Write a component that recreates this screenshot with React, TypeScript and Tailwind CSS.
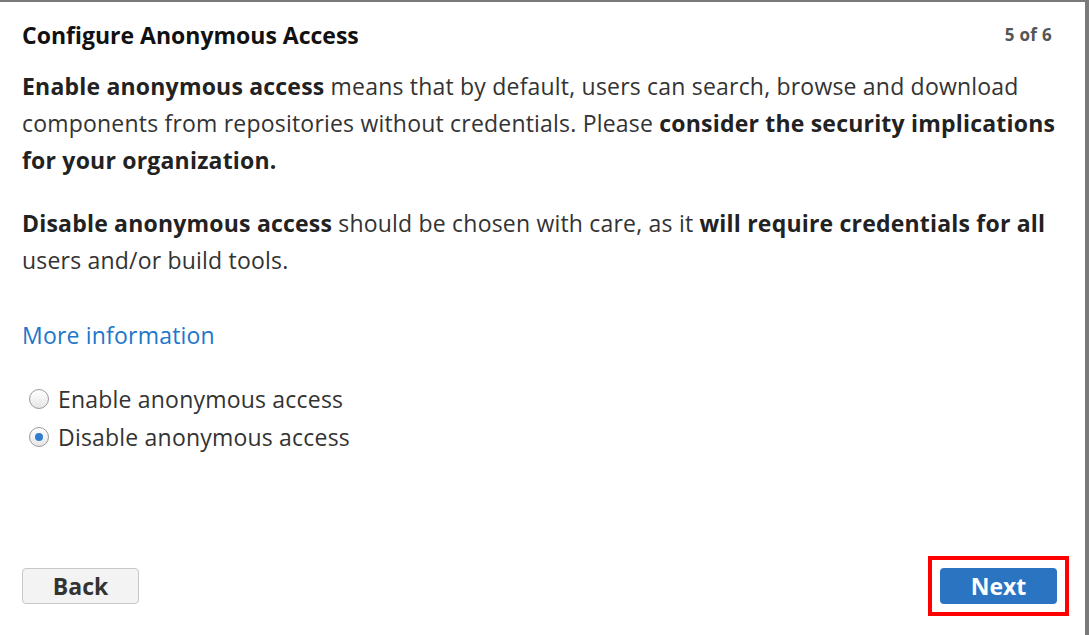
import React from 'react'

const font = { fontFamily: '"Open Sans", "Liberation Sans", sans-serif' }

function Radio({ checked }: { checked?: boolean }) {
  return (
    <span className="flex h-[20px] w-[20px] shrink-0 items-center justify-center rounded-full border border-[#9a9a9a] bg-gradient-to-b from-white to-[#e6e6e6]">
      {checked && <span className="h-[8px] w-[8px] rounded-full bg-[#2f7dd1]" />}
    </span>
  )
}

export default function App() {
  return (
    <div
      className="flex h-[635px] w-[1089px] flex-col border-t-2 border-r-4 border-[#7a7a7a] bg-white pl-[22px] pr-[25px] text-[#333]"
      style={font}
    >
      {/* Header */}
      <div className="flex items-center justify-between pt-[19px] pr-[8px]">
        <h1 className="text-[23px] font-bold leading-[28px] text-[#111]">Configure Anonymous Access</h1>
        <span className="text-[17px] font-bold tracking-[0.3px] text-[#555]">5 of 6</span>
      </div>

      {/* Body copy */}
      <div className="mt-[19px] text-[23px] leading-[37px] tracking-[0.2px]">
        <p>
          <b className="text-[#222]">Enable anonymous access</b> means that by default, users can search, browse and
          download components from repositories without credentials. Please{' '}
          <b className="text-[#222]">consider the security implications for your organization.</b>
        </p>
        <p className="mt-[26px]">
          <b className="text-[#222]">Disable anonymous access</b> should be chosen with care, as it{' '}
          <b className="text-[#222]">will require credentials for all</b> users and/or build tools.
        </p>
        <p className="mt-[38px]">
          <a className="text-[#2276c9]" href="#">More information</a>
        </p>
      </div>

      {/* Options */}
      <div className="mt-[29px] flex flex-col gap-[6px] pl-[7px] text-[23px] leading-[32px] tracking-[0.2px]">
        <label className="flex items-center gap-[9px]">
          <Radio />
          <span>Enable anonymous access</span>
        </label>
        <label className="flex items-center gap-[9px]">
          <Radio checked />
          <span>Disable anonymous access</span>
        </label>
      </div>

      {/* Footer */}
      <div className="mt-auto mb-[19px] flex items-center justify-between pr-[8px]">
        <button className="h-[36px] w-[117px] rounded-[4px] border border-[#c8c8c8] bg-[#f3f3f3] text-[23px] font-bold text-[#333]">
          Back
        </button>
        <div className="mr-[-17px] border-[4px] border-[#ff0000] p-[8px]">
          <button className="h-[36px] w-[117px] rounded-[4px] bg-[#2a74c2] text-[23px] font-bold text-white">
            Next
          </button>
        </div>
      </div>
    </div>
  )
}
